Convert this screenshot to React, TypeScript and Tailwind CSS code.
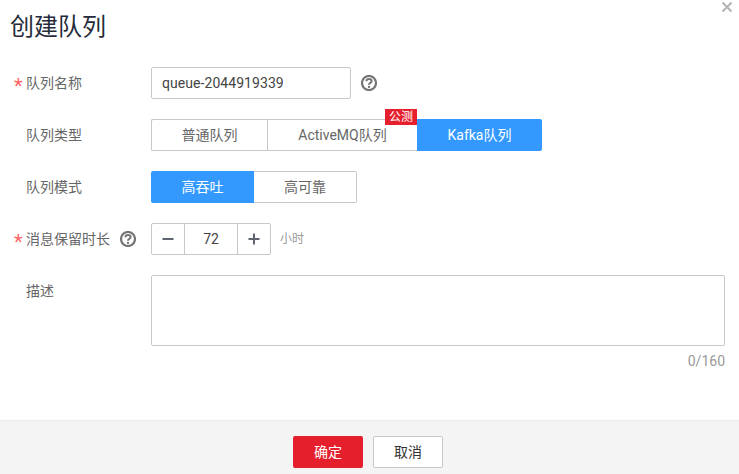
const FONT = "font-['Roboto','Noto_Sans_CJK_SC',sans-serif]";

function Help() {
  return (
    <svg width="16" height="16" viewBox="0 0 16 16" fill="none" className="shrink-0">
      <circle cx="8" cy="8" r="7" stroke="#757575" strokeWidth="2.2" />
      <path d="M5.4 6.3C5.5 4.8 6.6 3.9 8 3.9c1.5 0 2.6.9 2.6 2.2 0 2-2.6 1.7-2.6 3.7" stroke="#757575" strokeWidth="2" />
      <rect x="7" y="10.9" width="2" height="2" fill="#757575" />
    </svg>
  );
}

function Row({ label, required, help, children, className = "" }: { label: string; required?: boolean; help?: boolean; children: React.ReactNode; className?: string }) {
  return (
    <div className={`flex ${className}`}>
      <div className="w-[151px] h-8 shrink-0 flex items-center pl-[14px] text-[14px] text-[#666]">
        <span className="w-[12px] text-[#f66] text-[20px] leading-none pt-[6px]">{required ? "*" : ""}</span>
        <span>{label}</span>
        {help && <span className="ml-[10px]"><Help /></span>}
      </div>
      {children}
    </div>
  );
}

export default function App() {
  return (
    <div className={`${FONT} relative w-[739px] h-[474px] bg-white overflow-hidden flex flex-col`}>
      <button className="absolute right-[6px] top-[1px] w-3 h-3">
        <svg width="12" height="12" viewBox="0 0 12 12"><path d="M1.5 1.5l9 9M10.5 1.5l-9 9" stroke="#b4b4b4" strokeWidth="2" /></svg>
      </button>
      <h1 className="pl-[10px] pt-[11px] h-[67px] text-[24px] leading-[32px] text-[#252b3a]">创建队列</h1>

      <Row label="队列名称" required>
        <div className="w-[200px] h-8 border border-[#c8c8c8] rounded-[2px] flex items-center pl-[10px] text-[14px] tracking-[0.06px] text-[#444]">queue-2044919339</div>
        <div className="ml-[10px] h-8 flex items-center"><Help /></div>
      </Row>

      <Row label="队列类型" className="mt-5">
        <div className="flex h-8 text-[14px] text-[#666]">
          <div className="w-[116px] border border-r-0 border-[#c8c8c8] rounded-l-[2px] flex items-center justify-center">普通队列</div>
          <div className="relative w-[150px] border border-r-0 border-[#c8c8c8] flex items-center justify-center">
            ActiveMQ队列
            <span className="absolute right-0 top-[-11px] w-8 h-4 bg-[#e61f2d] text-white text-[12px] leading-4 text-center">公测</span>
          </div>
          <div className="w-[125px] bg-[#3399ff] text-white rounded-r-[2px] flex items-center justify-center">Kafka队列</div>
        </div>
      </Row>

      <Row label="队列模式" className="mt-5">
        <div className="flex h-8 text-[14px]">
          <div className="w-[103px] bg-[#3399ff] text-white rounded-l-[2px] flex items-center justify-center">高吞吐</div>
          <div className="w-[103px] border border-l-0 border-[#c8c8c8] rounded-r-[2px] text-[#666] flex items-center justify-center">高可靠</div>
        </div>
      </Row>

      <Row label="消息保留时长" required help className="mt-5">
        <div className="flex h-8 w-[120px] border border-[#c8c8c8] rounded-[2px] text-[#444]">
          <div className="w-[32px] flex items-center justify-center">
            <svg width="12" height="12" viewBox="0 0 12 12"><rect x="0.5" y="5" width="11" height="2" fill="#5e6570" /></svg>
          </div>
          <div className="flex-1 border-x border-[#c8c8c8] flex items-center justify-center text-[14px]">72</div>
          <div className="w-[32px] flex items-center justify-center">
            <svg width="12" height="12" viewBox="0 0 12 12"><path d="M0.5 6h11M6 0.5v11" stroke="#5e6570" strokeWidth="2" /></svg>
          </div>
        </div>
        <div className="ml-[9px] h-8 flex items-center text-[12px] text-[#999]">小时</div>
      </Row>

      <Row label="描述" className="mt-5">
        <div className="w-[574px] h-[71px] border border-[#c8c8c8] rounded-[2px]" />
      </Row>

      <div className="w-[725px] text-right text-[14px] leading-[20px] mt-[5px] text-[#999]">0/160</div>

      <div className="mt-auto h-[54px] bg-[#f4f4f4] border-t border-[#ececec] flex gap-[10px] pl-[293px] pt-[15px] text-[14px]">
        <button className="w-[70px] h-8 bg-[#e61f2d] text-white rounded-[2px]">确定</button>
        <button className="w-[70px] h-8 bg-white border border-[#c8c8c8] text-[#333] rounded-[2px]">取消</button>
      </div>
    </div>
  );
}
